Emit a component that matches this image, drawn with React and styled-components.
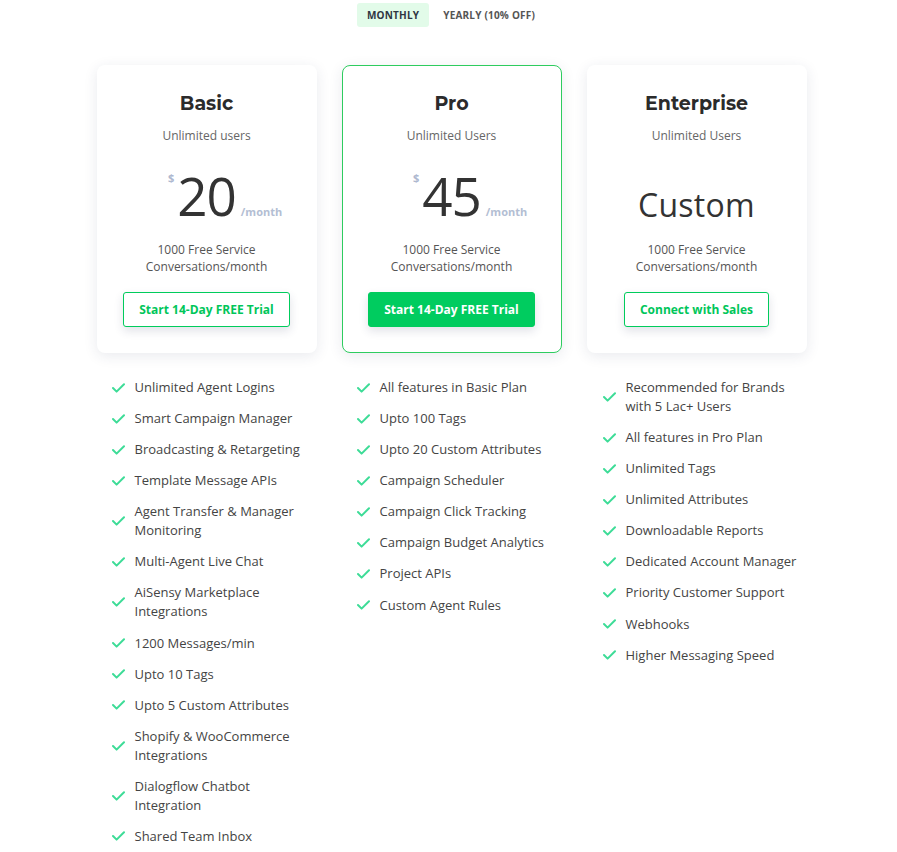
import React from "react";
import styled, { createGlobalStyle } from "styled-components";

const Global = createGlobalStyle`
  html, body { margin: 0; padding: 0; background: #fff; }
  body { font-family: "Open Sans", "Liberation Sans", sans-serif; color: #444; }
  * { box-sizing: border-box; }
`;

const Page = styled.div`
  display: flex;
  flex-direction: column;
  align-items: center;
  padding: 3px 0 0 6px;
`;

const Toggle = styled.div`
  display: flex;
  gap: 0;
  align-items: center;
  margin-left: 3px;
`;

const ToggleBtn = styled.button`
  font-family: "Open Sans", sans-serif;
  font-weight: 700;
  font-size: 10px;
  letter-spacing: 0.2px;
  color: ${(p) => (p.$active ? "#2f3542" : "#555")};
  background: ${(p) => (p.$active ? "#e2fbe9" : "transparent")};
  border: none;
  border-radius: 3px;
  height: 24px;
  padding: 0 10px;
  margin-right: 4px;
`;

const Cards = styled.div`
  display: grid;
  grid-template-columns: repeat(3, 220px);
  column-gap: 25px;
  margin-top: 38px;
`;

const Card = styled.div`
  background: #fff;
  border-radius: 8px;
  height: 288px;
  border: 1px solid ${(p) => (p.$featured ? "#2ecc5f" : "transparent")};
  box-shadow: 0 3px 14px rgba(40, 50, 90, 0.1);
  display: flex;
  flex-direction: column;
  align-items: center;
  padding-top: 25px;
`;

const Title = styled.div`
  font-family: "Montserrat", "Lato", "Open Sans", sans-serif;
  font-weight: 700;
  font-size: 19px;
  letter-spacing: 0;
  color: #2b2b2b;
  line-height: 26px;
`;

const Users = styled.div`
  font-size: 12px;
  color: #666;
  margin-top: 10px;
  line-height: 17px;
`;

const PriceRow = styled.div`
  height: 78px;
  margin-top: 14px;
  display: flex;
  align-items: center;
  justify-content: center;
`;

const Amount = styled.span`
  position: relative;
  font-size: 53px;
  font-weight: 400;
  color: #333;
  line-height: 60px;
  letter-spacing: -1px;
  margin-top: -2px;
`;

const Dollar = styled.span`
  position: absolute;
  right: 100%;
  top: 5px;
  margin-right: 3px;
  font-size: 11px;
  line-height: 14px;
  font-weight: 700;
  letter-spacing: 0;
  color: #aeb8cf;
`;

const Per = styled.span`
  position: absolute;
  left: 100%;
  bottom: 7px;
  margin-left: 5px;
  font-size: 11px;
  line-height: 14px;
  font-weight: 700;
  letter-spacing: 0;
  color: #b3bed3;
`;

const Custom = styled.span`
  font-size: 32px;
  color: #333;
  line-height: 40px;
  letter-spacing: 0.3px;
  margin-top: 16px;
`;

const Note = styled.div`
  font-size: 12px;
  color: #555;
  line-height: 17px;
  text-align: center;
  margin-top: 5px;
`;

const Action = styled.button`
  margin-top: 17px;
  height: 35px;
  padding: 0 15px;
  font-family: "Open Sans", sans-serif;
  font-weight: 700;
  font-size: 12px;
  border-radius: 3px;
  border: 1px solid #00cc5c;
  color: ${(p) => (p.$filled ? "#fff" : "#00c65a")};
  background: ${(p) => (p.$filled ? "#00cc5f" : "#fff")};
  box-shadow: 0 4px 10px rgba(40, 50, 90, 0.14);
`;

const Lists = styled.div`
  display: grid;
  grid-template-columns: repeat(3, 220px);
  column-gap: 25px;
  margin-top: 25px;
`;

const List = styled.ul`
  list-style: none;
  margin: 0;
  padding: 0 0 0 ${(p) => p.$pad || 15}px;
  display: flex;
  flex-direction: column;
  gap: 12.08px;
`;

const Item = styled.li`
  display: flex;
  align-items: center;
  gap: 10px;
  font-size: 13px;
  line-height: 19px;
  color: #444;
`;

const Check = () => (
  <svg width="13" height="10" viewBox="0 0 13 10" fill="none" style={{ flex: "none" }}>
    <path d="M1 5 L4.6 8.6 L12 1.2" stroke="#3ddc97" strokeWidth="2" strokeLinecap="round" strokeLinejoin="round" />
  </svg>
);

const plans = [
  {
    name: "Basic",
    users: "Unlimited users",
    price: "20",
    cta: "Start 14-Day FREE Trial",
    features: [
      "Unlimited Agent Logins",
      "Smart Campaign Manager",
      "Broadcasting & Retargeting",
      "Template Message APIs",
      ["Agent Transfer & Manager", "Monitoring"],
      "Multi-Agent Live Chat",
      ["AiSensy Marketplace", "Integrations"],
      "1200 Messages/min",
      "Upto 10 Tags",
      "Upto 5 Custom Attributes",
      ["Shopify & WooCommerce", "Integrations"],
      ["Dialogflow Chatbot", "Integration"],
      "Shared Team Inbox",
    ],
  },
  {
    name: "Pro",
    users: "Unlimited Users",
    price: "45",
    featured: true,
    cta: "Start 14-Day FREE Trial",
    features: [
      "All features in Basic Plan",
      "Upto 100 Tags",
      "Upto 20 Custom Attributes",
      "Campaign Scheduler",
      "Campaign Click Tracking",
      "Campaign Budget Analytics",
      "Project APIs",
      "Custom Agent Rules",
    ],
  },
  {
    name: "Enterprise",
    users: "Unlimited Users",
    custom: true,
    cta: "Connect with Sales",
    pad: 16,
    features: [
      ["Recommended for Brands", "with 5 Lac+ Users"],
      "All features in Pro Plan",
      "Unlimited Tags",
      "Unlimited Attributes",
      "Downloadable Reports",
      "Dedicated Account Manager",
      "Priority Customer Support",
      "Webhooks",
      "Higher Messaging Speed",
    ],
  },
];

export default function App() {
  return (
    <>
      <Global />
      <Page>
        <Toggle>
          <ToggleBtn $active>MONTHLY</ToggleBtn>
          <ToggleBtn>YEARLY (10% OFF)</ToggleBtn>
        </Toggle>
        <Cards>
          {plans.map((p) => (
            <Card key={p.name} $featured={p.featured}>
              <Title>{p.name}</Title>
              <Users>{p.users}</Users>
              <PriceRow>
                {p.custom ? (
                  <Custom>Custom</Custom>
                ) : (
                  <Amount>
                    <Dollar>$</Dollar>
                    {p.price}
                    <Per>/month</Per>
                  </Amount>
                )}
              </PriceRow>
              <Note>
                1000 Free Service
                <br />
                Conversations/month
              </Note>
              <Action $filled={p.featured}>{p.cta}</Action>
            </Card>
          ))}
        </Cards>
        <Lists>
          {plans.map((p) => (
            <List key={p.name} $pad={p.pad}>
              {p.features.map((f, i) => (
                <Item key={i}>
                  <Check />
                  <span>
                    {Array.isArray(f) ? (
                      <>
                        {f[0]}
                        <br />
                        {f[1]}
                      </>
                    ) : (
                      f
                    )}
                  </span>
                </Item>
              ))}
            </List>
          ))}
        </Lists>
      </Page>
    </>
  );
}
